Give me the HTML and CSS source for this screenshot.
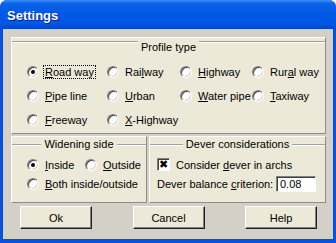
FILE: index.html
```html
<!DOCTYPE html>
<html lang="en">
<head>
    <meta charset="UTF-8">
    <title>Settings</title>
    <link rel="stylesheet" href="styles.css">
</head>
<body>

<div class="window">
    <div class="titlebar"><span class="title">Settings</span></div>
    <div class="client">
        <div class="panel profile">
            <div class="caption caption-top"><span>Profile type</span></div>
            <div class="profile-grid">
                <div class="opt"><span class="radio checked"></span><span class="text focus"><u>R</u>oad way</span></div>
                <div class="opt"><span class="radio"></span><span class="text">Rai<u>l</u>way</span></div>
                <div class="opt"><span class="radio"></span><span class="text"><u>H</u>ighway</span></div>
                <div class="opt"><span class="radio"></span><span class="text">Rur<u>a</u>l way</span></div>
                <div class="opt"><span class="radio"></span><span class="text"><u>P</u>ipe line</span></div>
                <div class="opt"><span class="radio"></span><span class="text"><u>U</u>rban</span></div>
                <div class="opt"><span class="radio"></span><span class="text"><u>W</u>ater pipe</span></div>
                <div class="opt"><span class="radio"></span><span class="text"><u>T</u>axiway</span></div>
                <div class="opt"><span class="radio"></span><span class="text"><u>F</u>reeway</span></div>
                <div class="opt"><span class="radio"></span><span class="text"><u>X</u>-Highway</span></div>
            </div>
        </div>

        <div class="lower">
            <div class="panel widening">
                <div class="caption"><span>Widening side</span></div>
                <div class="rows">
                    <div class="row">
                        <div class="opt inside"><span class="radio checked"></span><span class="text"><u>I</u>nside</span></div>
                        <div class="opt"><span class="radio"></span><span class="text"><u>O</u>utside</span></div>
                    </div>
                    <div class="row">
                        <div class="opt"><span class="radio"></span><span class="text"><u>B</u>oth inside/outside</span></div>
                    </div>
                </div>
            </div>
            <div class="panel dever">
                <div class="caption"><span>Dever considerations</span></div>
                <div class="rows">
                    <div class="row">
                        <span class="check">&#10006;</span><span class="check-text">Consider <u>d</u>ever in archs</span>
                    </div>
                    <div class="row">
                        <span class="field-label">Dever balance <u>c</u>riterion:</span>
                        <span class="field">0.08</span>
                    </div>
                </div>
            </div>
        </div>

        <div class="buttons">
            <button class="btn">Ok</button>
            <button class="btn">Cancel</button>
            <button class="btn">Help</button>
        </div>
    </div>
</div>

</body>
</html>
```

FILE: styles.css
```css
body {
    margin: 0;
    background: #ffffff;
    font-family: 'Liberation Sans', Arial, sans-serif;
    font-size: 11px;
    color: #000;
}

.window {
    width: 336px;
    height: 243px;
    background: #0552e0;
    border-radius: 7px 7px 0 0;
    overflow: hidden;
    display: flex;
    flex-direction: column;
}

.titlebar {
    height: 29px;
    flex: none;
    background: linear-gradient(#3d8ff8 0%, #0b63e9 12%, #0058e6 45%, #0157e6 80%, #0246cc 100%);
    display: flex;
    align-items: center;
    padding-left: 7px;
}

.title {
    color: #fff;
    font-weight: bold;
    font-size: 13px;
    padding-top: 1px;
    text-shadow: 1px 1px 0 #0a1e8a;
}

.client {
    margin: 0 3px 4px;
    height: 210px;
    box-sizing: border-box;
    background: #d4d0c8;
    padding: 8px 7px 0 8px;
}

.panel {
    background: #ece9d8;
    border: 1px solid;
    border-color: #ffffff #8c8c8c #8c8c8c #ffffff;
    box-sizing: border-box;
}

.profile {
    height: 97px;
}

.caption {
    display: flex;
    align-items: center;
    gap: 3px;
    line-height: 13px;
    margin-top: 1px;
}

.caption::before,
.caption::after {
    content: "";
    flex: 1;
    border-top: 1px solid #a0a0a0;
    border-bottom: 1px solid #ffffff;
}

.caption-top {
    align-items: flex-start;
    margin-top: 3px;
}

.profile-grid {
    display: grid;
    grid-template-columns: 80px 73px 72px auto;
    grid-auto-rows: 24px;
    align-items: center;
    padding: 6px 0 0 15px;
}

.opt {
    display: flex;
    align-items: center;
}

.radio {
    width: 12px;
    height: 12px;
    box-sizing: border-box;
    border-radius: 50%;
    background: #fff;
    border: 1px solid;
    border-color: #808080 #ffffff #ffffff #808080;
    box-shadow: inset 1px 1px 0 #404040, inset -1px -1px 0 #d4d0c8;
    margin-right: 4px;
    position: relative;
    flex: none;
}

.radio.checked::after {
    content: "";
    position: absolute;
    left: 3px;
    top: 3px;
    width: 4px;
    height: 4px;
    border-radius: 50%;
    background: #000;
}

.text {
    border: 1px dotted transparent;
    padding: 0 1px;
    line-height: 12px;
    white-space: nowrap;
}

.text.focus {
    border-color: #000;
}

.lower {
    display: flex;
    gap: 2px;
    margin-top: 2px;
    height: 67px;
}

.widening {
    width: 136px;
}

.dever {
    flex: 1;
}

.rows {
    margin-top: 4px;
}

.row {
    height: 19px;
    display: flex;
    align-items: center;
}

.widening .rows {
    padding-left: 15px;
}

.inside {
    width: 58px;
}

.dever .rows {
    padding-left: 7px;
}

.check {
    width: 13px;
    height: 13px;
    box-sizing: border-box;
    background: #fff;
    border: 1px solid;
    border-color: #808080 #ffffff #ffffff #808080;
    box-shadow: inset 1px 1px 0 #404040;
    font-size: 11px;
    font-weight: bold;
    line-height: 11px;
    text-align: center;
    margin-right: 4px;
    font-family: 'DejaVu Sans', sans-serif;
}

.check-text {
    padding-left: 2px;
}

.field-label {
    width: 119px;
    white-space: nowrap;
}

.field {
    width: 40px;
    height: 16px;
    box-sizing: border-box;
    background: #fff;
    border: 1px solid;
    border-color: #808080 #ffffff #ffffff #808080;
    box-shadow: inset 1px 1px 0 #404040;
    padding: 1px 0 0 3px;
    line-height: 13px;
}

.buttons {
    display: flex;
    justify-content: space-between;
    padding: 0 9px 0 9px;
    margin-top: 3px;
}

.btn {
    width: 72px;
    height: 23px;
    background: #ece9d8;
    border: 1px solid;
    border-color: #ffffff #202020 #202020 #ffffff;
    box-shadow: inset -1px -1px 0 #808080;
    font-family: 'Liberation Sans', Arial, sans-serif;
    font-size: 11px;
    color: #000;
    padding: 0;
}
```
